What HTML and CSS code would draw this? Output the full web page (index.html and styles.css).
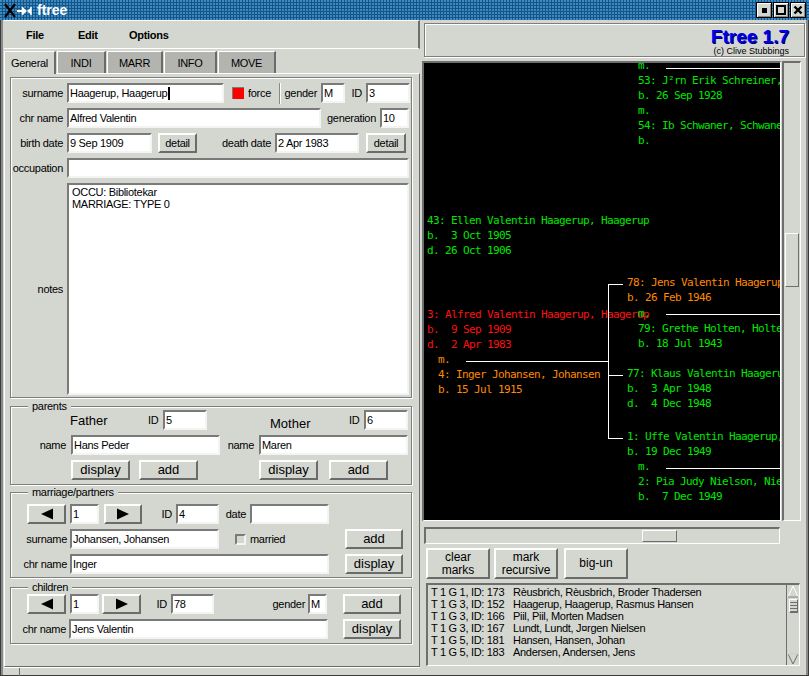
FILE: index.html
```html
<!DOCTYPE html>
<html lang="en">
<head>
<meta charset="utf-8">
<title>ftree</title>
<link rel="stylesheet" href="styles.css">
</head>
<body>
<div class="window">
  <header class="titlebar">
    <svg class="wm-icon" width="30" height="16" viewBox="0 0 30 16">
      <path d="M2 2 L12 15 M12 2 L2 15" stroke="#000" stroke-width="2.2" fill="none"/>
      <path d="M14 9 H19" stroke="#fff" stroke-width="2"/>
      <path d="M19.5 5 V13 M28 5 V13" stroke="#fff" stroke-width="1.5"/>
      <path d="M20 5.5 L24 9 L20 12.5 Z M28 5.5 L24 9 L28 12.5 Z" fill="#fff"/>
    </svg>
    <span class="wm-title">ftree</span>
    <div class="wm-buttons">
      <span class="wm-btn"><i class="ico-min"></i></span>
      <span class="wm-btn"><i class="ico-max"></i></span>
      <span class="wm-btn">
        <svg width="10" height="10" viewBox="0 0 10 10"><path d="M1.5 1.5 L8.5 8.5 M8.5 1.5 L1.5 8.5" stroke="#000" stroke-width="2.4"/></svg>
      </span>
    </div>
  </header>

  <div class="client">
    <section class="left">
      <nav class="menubar">
        <span class="menu m-file">File</span>
        <span class="menu m-edit">Edit</span>
        <span class="menu">Options</span>
      </nav>
      <div class="tabs">
        <span class="tab active w52">General</span>
        <span class="tab w49">INDI</span>
        <span class="tab w56">MARR</span>
        <span class="tab w53">INFO</span>
        <span class="tab w58">MOVE</span>
      </div>

      <div class="tabpage">
        <div class="frame general">
          <div class="row">
            <span class="lbl">surname</span>
            <span class="inp w157">Haagerup, Haagerup<i class="caret"></i></span>
            <span class="chk red ml8"></span>
            <span class="txt ml4 w31">force</span>
            <span class="vsep"></span>
            <span class="lbr w40">gender</span>
            <span class="inp w24">M</span>
            <span class="lbr w21">ID</span>
            <span class="inp w44">3</span>
          </div>
          <div class="row">
            <span class="lbl">chr name</span>
            <span class="inp w254">Alfred Valentin</span>
            <span class="lbr w59">generation</span>
            <span class="inp w29">10</span>
          </div>
          <div class="row">
            <span class="lbl">birth date</span>
            <span class="inp w85">9 Sep 1909</span>
            <span class="btn w39 ml6">detail</span>
            <span class="lbr w78">death date</span>
            <span class="inp w84">2 Apr 1983</span>
            <span class="btn w40 ml7">detail</span>
          </div>
          <div class="row">
            <span class="lbl">occupation</span>
            <span class="inp w342"></span>
          </div>
          <div class="row notes-row">
            <span class="lbl">notes</span>
            <div class="notes w342">OCCU: Bibliotekar<br>MARRIAGE: TYPE 0</div>
          </div>
        </div>

        <fieldset class="group parents">
          <legend>parents</legend>
          <div class="row">
            <span class="big w78 ml59">Father</span>
            <span class="txt w15">ID</span>
            <span class="inp w44">5</span>
            <span class="big w79 ml63 lower">Mother</span>
            <span class="txt w15">ID</span>
            <span class="inp w44">6</span>
          </div>
          <div class="row">
            <span class="lbr w60 pr5">name</span>
            <span class="inp w149">Hans Peder</span>
            <span class="lbr w39 pr5">name</span>
            <span class="inp w149">Maren</span>
          </div>
          <div class="row">
            <span class="btn big-btn w59 ml60">display</span>
            <span class="btn big-btn w59 ml9">add</span>
            <span class="btn big-btn w59 ml61">display</span>
            <span class="btn big-btn w59 ml11">add</span>
          </div>
        </fieldset>

        <fieldset class="group marriage">
          <legend>marriage/partners</legend>
          <div class="row">
            <span class="btn w39 ml16"><svg width="14" height="12" viewBox="0 0 14 12"><path d="M1 6 L13 0.5 V11.5 Z" fill="#000"/></svg></span>
            <span class="inp w29 ml4">1</span>
            <span class="btn w38 ml5"><svg width="14" height="12" viewBox="0 0 14 12"><path d="M13 6 L1 0.5 V11.5 Z" fill="#000"/></svg></span>
            <span class="lbr w34">ID</span>
            <span class="inp w43">4</span>
            <span class="lbr w31">date</span>
            <span class="inp w79"></span>
          </div>
          <div class="row">
            <span class="lbr w59 pr3">surname</span>
            <span class="inp w149">Johansen, Johansen</span>
            <span class="chk grey ml16"></span>
            <span class="txt ml4">married</span>
            <span class="btn big-btn w58 mla">add</span>
          </div>
          <div class="row">
            <span class="lbr w59 pr3">chr name</span>
            <span class="inp w259">Inger</span>
            <span class="btn big-btn w58 mla">display</span>
          </div>
        </fieldset>

        <fieldset class="group children">
          <legend>children</legend>
          <div class="row">
            <span class="btn w39 ml16"><svg width="14" height="12" viewBox="0 0 14 12"><path d="M1 6 L13 0.5 V11.5 Z" fill="#000"/></svg></span>
            <span class="inp w29 ml4">1</span>
            <span class="btn w39 ml3"><svg width="14" height="12" viewBox="0 0 14 12"><path d="M13 6 L1 0.5 V11.5 Z" fill="#000"/></svg></span>
            <span class="lbr w30">ID</span>
            <span class="inp w43">78</span>
            <span class="lbr w94 pr3">gender</span>
            <span class="inp w19">M</span>
            <span class="btn big-btn w58 mla">add</span>
          </div>
          <div class="row">
            <span class="lbr w58 pr3">chr name</span>
            <span class="inp w259">Jens Valentin</span>
            <span class="btn big-btn w58 mla">display</span>
          </div>
        </fieldset>
      </div>
      <div class="lstrip"><span class="lstrip-knob"></span></div>
    </section>

    <section class="right">
      <div class="brand">
        <div class="brand-name">Ftree 1.7</div>
        <div class="brand-copy">(c) Clive Stubbings</div>
      </div>

      <div class="treebox">
        <div class="canvas">
          <div class="node green n1">m.
53: J²rn Erik Schreiner, Schreiner
b. 26 Sep 1928
m.
54: Ib Schwaner, Schwaner
b.</div>
          <div class="node green n2">43: Ellen Valentin Haagerup, Haagerup
b.  3 Oct 1905
d. 26 Oct 1906</div>
          <div class="node orange n3">78: Jens Valentin Haagerup, Haagerup
b. 26 Feb 1946</div>
          <div class="node red n4">3: Alfred Valentin Haagerup, Haagerup
b.  9 Sep 1909
d.  2 Apr 1983</div>
          <div class="node green n5">m.
79: Grethe Holten, Holten
b. 18 Jul 1943</div>
          <div class="node orange n6">m.
4: Inger Johansen, Johansen
b. 15 Jul 1915</div>
          <div class="node green n7">77: Klaus Valentin Haagerup, Haagerup
b.  3 Apr 1948
d.  4 Dec 1948</div>
          <div class="node green n8">1: Uffe Valentin Haagerup, Haagerup
b. 19 Dec 1949</div>
          <div class="node green n9">m.
2: Pia Judy Nielson, Nielson
b.  7 Dec 1949</div>
          <span class="ln h l1"></span>
          <span class="ln h l2"></span>
          <span class="ln h l3"></span>
          <span class="ln h l4"></span>
          <span class="ln v l5"></span>
          <span class="ln h s1"></span>
          <span class="ln h s2"></span>
          <span class="ln h s3"></span>
        </div>
        <div class="vscroll"><span class="vthumb"></span></div>
      </div>

      <div class="hscroll"><span class="hthumb"></span></div>

      <div class="actions">
        <span class="abtn">clear<br>marks</span>
        <span class="abtn ml4">mark<br>recursive</span>
        <span class="abtn ml6">big-un</span>
      </div>

      <div class="list">
        <div class="list-body">
          <div><span class="lid">T 1 G 1, ID: 173</span>Rèusbrich, Rèusbrich, Broder Thadersen</div>
          <div><span class="lid">T 1 G 3, ID: 152</span>Haagerup, Haagerup, Rasmus Hansen</div>
          <div><span class="lid">T 1 G 3, ID: 166</span>Piil, Piil, Morten Madsen</div>
          <div><span class="lid">T 1 G 3, ID: 167</span>Lundt, Lundt, J¤rgen Nielsen</div>
          <div><span class="lid">T 1 G 5, ID: 181</span>Hansen, Hansen, Johan</div>
          <div><span class="lid">T 1 G 5, ID: 183</span>Andersen, Andersen, Jens</div>
        </div>
        <div class="list-scroll">
          <svg class="arr" width="12" height="13" viewBox="0 0 12 13"><path d="M6 1 L11 12 H1 Z" fill="#d4d6d0" stroke="#fff" stroke-width="1"/><path d="M11 12 H1" stroke="#6e6e6e"/></svg>
          <span class="grip"></span>
          <span class="lspacer"></span>
          <svg class="arr" width="12" height="12" viewBox="0 0 12 12"><path d="M6 11 L11 1 H1 Z" fill="#d4d6d0" stroke="#6e6e6e" stroke-width="1"/><path d="M1 1 H11" stroke="#fff"/></svg>
        </div>
      </div>
    </section>
  </div>
</div>
</body>
</html>
```
FILE: styles.css
```css
* { box-sizing: border-box; }
html, body { margin: 0; padding: 0; }
body {
  width: 809px; height: 676px; overflow: hidden;
  background: #d4d6d0;
  font-family: "Liberation Sans", Arial, Helvetica, sans-serif;
  font-size: 11px; letter-spacing: -0.3px; color: #000;
}
.window { width: 809px; height: 676px; display: flex; flex-direction: column; }

/* title bar */
.titlebar {
  height: 20px; flex: none; display: flex; align-items: center;
  background-color: #10568a;
  background-image: radial-gradient(circle at 1px 1px, #4189bd 0.8px, transparent 1.3px);
  background-size: 3px 3px;
  padding-left: 3px;
}
.wm-icon { flex: none; margin-right: 4px; }
.wm-title { color: #fff; font-weight: bold; font-size: 14px; letter-spacing: 0; }
.wm-buttons { margin-left: auto; display: flex; gap: 1px; padding-right: 3px; }
.wm-btn {
  width: 16px; height: 16px; background: #d4d6d0; border: 1px solid #000;
  box-shadow: inset 1px 1px #fff, inset -1px -1px #8a8a8a;
  display: flex; align-items: center; justify-content: center;
}
.ico-min { width: 5px; height: 5px; background: #000; }
.ico-max { width: 10px; height: 10px; border: 2px solid #000; }

/* client */
.client {
  flex: 1; min-height: 0; display: flex; padding: 0 3px 0 4px;
  box-shadow: inset 1px 0 #3a3a3a, inset -1px 0 #3a3a3a, inset 0 -1px #3a3a3a, inset 3px 0 #8a8a8a, inset -3px 0 #8a8a8a;
}
.left { width: 416px; flex: none; display: flex; flex-direction: column; }
.right { flex: 1; min-width: 0; display: flex; flex-direction: column; padding-left: 2px; }

/* menu */
.menubar {
  height: 29px; flex: none; display: flex; align-items: center;
  padding-left: 22px; font-weight: bold; font-size: 11px;
  border-top: 1px solid #fff; border-bottom: 1px solid #fff;
  border-right: 2px solid #6e6e6e;
}
.menu { display: inline-block; }
.m-file { width: 52px; }
.m-edit { width: 51px; }

/* tabs */
.tabs { height: 24px; flex: none; display: flex; align-items: flex-end; gap: 1px; }
.tab {
  height: 22px; display: flex; align-items: center; justify-content: center;
  background: #b3b4b0; border-top: 1px solid #fff; border-left: 1px solid #fff;
  border-right: 2px solid #6b6b6b; font-size: 11px;
}
.tab.active { background: #d4d6d0; height: 23px; margin-bottom: -1px; position: relative; z-index: 1; }

.tabpage {
  flex: 1; min-height: 0; display: flex; flex-direction: column;
  border: 1px solid; border-color: #fff #6b6b6b #6b6b6b #fff;
  padding: 3px 7px 0 5px;
}
.lstrip { height: 9px; flex: none; border-top: 1px solid #fff; display: flex; }
.lstrip-knob { width: 16px; border-right: 1px solid #6e6e6e; }

/* frames */
.frame { border: 1px solid #7d7d7d; box-shadow: inset 1px 1px #fff, 1px 1px #fff; }
.general { padding: 5px 0 2px 0; flex: none; }
fieldset.group {
  margin: 0; padding: 0; min-width: 0; flex: none;
  border: 1px solid #7d7d7d; box-shadow: inset 1px 1px #fff, 1px 1px #fff;
}
fieldset.group legend {
  padding: 0 4px; margin-left: 17px; height: 8px; line-height: 8px;
  font-size: 11px; background: #d4d6d0;
}
.parents { margin-top: 4px !important; padding: 0 0 4px 0 !important; }
.marriage { margin-top: 3px !important; padding: 8px 8px 3px 0 !important; }
.children { margin-top: 5px !important; padding: 3px 10px 4px 0 !important; }

/* rows */
.row { display: flex; align-items: center; height: 20px; white-space: nowrap; }
.row + .row { margin-top: 5px; }
.notes-row { height: 212px; }
.lbl { width: 56px; flex: none; text-align: right; padding-right: 4px; }
.lbr { flex: none; text-align: right; padding-right: 4px; }
.pr3 { padding-right: 3px; }
.pr5 { padding-right: 5px; }
.txt { flex: none; }
.big { flex: none; font-size: 13px; letter-spacing: 0; }
.lower { padding-top: 6px; }

.inp {
  flex: none; height: 20px; background: #fff;
  border: 2px solid; border-color: #7a7a7a #f4f4f4 #f4f4f4 #7a7a7a;
  padding: 0 2px 0 1px; line-height: 16px; overflow: hidden; white-space: nowrap;
}
.caret { display: inline-block; width: 2px; height: 13px; background: #000; vertical-align: -3px; margin-left: 1px; }
.notes {
  flex: none; height: 212px; background: #fff;
  border: 2px solid; border-color: #7a7a7a #f4f4f4 #f4f4f4 #7a7a7a;
  padding: 1px 3px; line-height: 12px; align-self: flex-start;
}
.btn {
  flex: none; height: 20px; background: #d4d6d0;
  border: 2px solid; border-color: #fff #6b6b6b #6b6b6b #fff;
  display: flex; align-items: center; justify-content: center; line-height: 16px;
}
.big-btn { font-size: 13px; letter-spacing: 0; }
.chk { flex: none; border: 2px solid; border-color: #7a7a7a #f4f4f4 #f4f4f4 #7a7a7a; }
.chk.red { width: 12px; height: 12px; background: #f00; border-width: 1px 0 0 1px; }
.chk.grey { width: 11px; height: 11px; background: #d4d6d0; }
.vsep { flex: none; width: 2px; height: 21px; border-left: 1px solid #8a8a8a; border-right: 1px solid #fff; }

/* widths / margins */
.w15{width:15px}.w19{width:19px}.w21{width:21px}.w24{width:24px}.w29{width:29px}.w30{width:30px}
.w31{width:31px}.w34{width:34px}.w38{width:38px}.w39{width:39px}.w40{width:40px}.w43{width:43px}
.w44{width:44px}.w49{width:49px}.w52{width:52px}.w53{width:53px}.w56{width:56px}.w58{width:58px}
.w59{width:59px}.w60{width:60px}.w78{width:78px}.w79{width:79px}.w84{width:84px}.w85{width:85px}
.w94{width:94px}.w149{width:149px}.w157{width:157px}.w254{width:254px}.w259{width:259px}.w342{width:342px}
.ml3{margin-left:3px}.ml4{margin-left:4px}.ml5{margin-left:5px}.ml6{margin-left:6px}.ml7{margin-left:7px}
.ml8{margin-left:8px}.ml9{margin-left:9px}.ml11{margin-left:11px}.ml16{margin-left:16px}
.ml59{margin-left:59px}.ml60{margin-left:60px}.ml61{margin-left:61px}.ml63{margin-left:63px}
.mla{margin-left:auto}

/* right pane */
.brand {
  height: 34px; flex: none; margin: 3px 1px 0 2px;
  border: 1px solid #7d7d7d; box-shadow: inset 1px 1px #fff, 1px 1px #fff;
  display: flex; flex-direction: column; align-items: flex-end; padding-right: 15px;
}
.brand-name {
  font-weight: bold; font-size: 19px; line-height: 19px; margin-top: 3px;
  color: #0000f0; text-shadow: 1px 1px 0 #000060; letter-spacing: 0;
}
.brand-copy { font-size: 9px; line-height: 10px; letter-spacing: 0; }

.treebox { height: 460px; flex: none; margin-top: 4px; display: flex; }
.canvas {
  width: 359px; flex: none; position: relative; overflow: hidden; background: #000;
  border-style: solid; border-width: 2px 1px 1px 2px; border-color: #6e6e6e #fff #fff #6e6e6e;
  font-family: "DejaVu Sans Mono", "Liberation Mono", monospace; font-size: 11px; letter-spacing: -0.62px;
}
.node { position: absolute; white-space: pre; line-height: 15px; }
.green { color: #00e800; }
.orange { color: #ff8a00; }
.red { color: #ff1010; }
.n1 { left: 214px; top: -5px; }
.n2 { left: 3px; top: 150px; }
.n3 { left: 203px; top: 212px; }
.n4 { left: 3px; top: 244px; }
.n5 { left: 214px; top: 243px; }
.n6 { left: 14px; top: 289px; }
.n7 { left: 203px; top: 303px; }
.n8 { left: 203px; top: 366px; }
.n9 { left: 214px; top: 396px; }
.ln { position: absolute; background: #fff; }
.ln.h { height: 1px; }
.ln.v { width: 1px; }
.l1 { left: 242px; top: 5px; width: 200px; }
.l2 { left: 242px; top: 251px; width: 200px; }
.l3 { left: 42px; top: 298px; width: 142px; }
.l4 { left: 242px; top: 405px; width: 200px; }
.l5 { left: 184px; top: 221px; height: 155px; }
.s1 { left: 184px; top: 221px; width: 15px; }
.s2 { left: 184px; top: 312px; width: 15px; }
.s3 { left: 184px; top: 375px; width: 15px; }

.vscroll {
  width: 19px; flex: none; margin-left: 1px; position: relative;
  border-style: solid; border-width: 2px 1px 1px 2px; border-color: #6e6e6e #fff #fff #6e6e6e;
}
.vthumb {
  position: absolute; left: 1px; right: 1px; top: 170px; height: 54px;
  border: 1px solid; border-color: #fff #6e6e6e #6e6e6e #fff;
}
.hscroll {
  height: 17px; width: 356px; flex: none; margin: 6px 0 0 2px; position: relative;
  border-style: solid; border-width: 2px 1px 1px 2px; border-color: #6e6e6e #fff #fff #6e6e6e;
}
.hthumb {
  position: absolute; top: 1px; bottom: 1px; left: 216px; width: 35px;
  border: 1px solid; border-color: #fff #6e6e6e #6e6e6e #fff;
}

.actions { height: 31px; flex: none; margin-top: 4px; padding-left: 4px; display: flex; }
.abtn {
  width: 64px; height: 31px; flex: none;
  border: 2px solid; border-color: #fff #6b6b6b #6b6b6b #fff;
  display: flex; align-items: center; justify-content: center; text-align: center;
  font-size: 12px; line-height: 13px; letter-spacing: 0;
}

.list {
  height: 83px; flex: none; margin: 4px 6px 0 4px; display: flex;
  border-style: solid; border-width: 2px 1px 1px 2px; border-color: #6e6e6e #fff #fff #6e6e6e;
}
.list-body { flex: 1; padding: 1px 0 0 3px; line-height: 12px; white-space: nowrap; overflow: hidden; }
.lid { display: inline-block; width: 82px; }
.list-scroll { width: 13px; flex: none; border-left: 1px solid #6e6e6e; display: flex; flex-direction: column; align-items: center; }
.arr { flex: none; }
.grip {
  width: 9px; height: 14px; flex: none; margin-top: 1px;
  border: 1px solid; border-color: #fff #6e6e6e #6e6e6e #fff;
  background: repeating-linear-gradient(#d4d6d0 0 2px, #6e6e6e 2px 3px);
}
.lspacer { flex: 1; }
```
